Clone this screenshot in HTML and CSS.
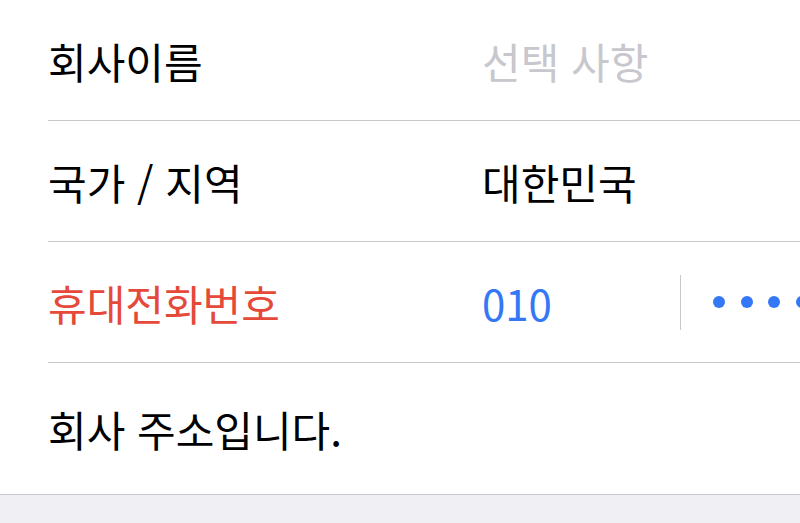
FILE: index.html
```html
<!DOCTYPE html>
<html lang="ko">

<head>
    <meta charset="UTF-8">
    <meta name="viewport" content="width=device-width, initial-scale=1.0">
    <title>회사 정보</title>
    <link rel="stylesheet" href="styles.css">
</head>

<body>
    <div class="form">
        <div class="row">
            <div class="label">회사이름</div>
            <div class="value placeholder">선택 사항</div>
        </div>
        <div class="row">
            <div class="label">국가 / 지역</div>
            <div class="value">대한민국</div>
        </div>
        <div class="row">
            <div class="label error">휴대전화번호</div>
            <div class="value phone">
                <span class="prefix">010</span>
                <span class="divider"></span>
                <span class="dots">
                    <i></i><i></i><i></i><i></i>
                </span>
            </div>
        </div>
        <div class="row last">
            <div class="label">회사 주소입니다.</div>
        </div>
    </div>
</body>

</html>
```

FILE: styles.css
```css
body {
    margin: 0;
    padding: 0;
    font-family: "Noto Sans CJK KR", "Noto Sans", sans-serif;
    background-color: #efeff4;
    overflow: hidden;
}

.form {
    background-color: #fff;
    border-bottom: 1px solid #c8c7cc;
}

.row {
    display: flex;
    align-items: center;
    height: 120px;
    margin-left: 48px;
    border-bottom: 1px solid #c8c7cc;
    font-size: 42px;
    color: #000;
    white-space: nowrap;
}

.row.last {
    height: 131px;
    border-bottom: none;
}

.label {
    width: 434px;
    flex-shrink: 0;
}

.error {
    color: #e5493a;
}

.placeholder {
    color: #c7c7cd;
}

.phone {
    display: flex;
    align-items: center;
    color: #3478f6;
}

.prefix {
    width: 198px;
}

.divider {
    width: 1px;
    height: 55px;
    background-color: #c8c7cc;
}

.dots {
    display: flex;
    gap: 15.5px;
    padding-left: 32px;
}

.dots i {
    width: 12px;
    height: 12px;
    border-radius: 50%;
    background-color: #3478f6;
}
```
